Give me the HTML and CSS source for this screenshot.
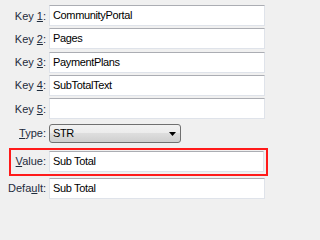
FILE: index.html
```html
<!DOCTYPE html>
<html>
<head>
<meta charset="utf-8">
<link rel="stylesheet" href="styles.css">
</head>
<body>
<div class="form">
  <div class="row key1"><label class="lbl">Key <u>1</u>:</label><div class="field">CommunityPortal</div></div>
  <div class="row"><label class="lbl">Key <u>2</u>:</label><div class="field">Pages</div></div>
  <div class="row"><label class="lbl">Key <u>3</u>:</label><div class="field">PaymentPlans</div></div>
  <div class="row"><label class="lbl">Key <u>4</u>:</label><div class="field">SubTotalText</div></div>
  <div class="row"><label class="lbl">Key <u>5</u>:</label><div class="field"></div></div>
  <div class="row typerow"><label class="lbl"><u>T</u>ype:</label>
    <div class="select"><span>STR</span>
      <svg class="arrow" width="7" height="4" viewBox="0 0 7 4"><path d="M0 0H7L3.5 4Z" fill="#000"/></svg>
    </div>
  </div>
  <div class="highlight">
    <div class="row"><label class="lbl"><u>V</u>alue:</label><div class="field">Sub Total</div></div>
  </div>
  <div class="row defrow"><label class="lbl">Defa<u>u</u>lt:</label><div class="field">Sub Total</div></div>
</div>
</body>
</html>
```
FILE: styles.css
```css
html, body {
  margin: 0;
  padding: 0;
  background: #f0f0f0;
}
body {
  font-family: "Liberation Sans", Arial, sans-serif;
  font-size: 11px;
  color: #000;
}
.form {
  box-sizing: border-box;
  width: 270px;
  height: 201px;
  display: flex;
  flex-direction: column;
  padding: 5px 0 0 0;
}
.row {
  display: grid;
  grid-template-columns: 46px 216px;
  column-gap: 3px;
  align-items: center;
  height: 21px;
  margin-bottom: 2.33px;
}
.lbl {
  text-align: right;
  color: #1e2b3c;
  white-space: nowrap;
}
.lbl u {
  text-decoration-thickness: 1px;
  text-underline-offset: 1px;
}
.field, .select span {
  letter-spacing: -0.35px;
}
.field {
  box-sizing: border-box;
  height: 21px;
  background: #fff;
  border: 1px solid #dfe3ea;
  border-top-color: #abadb3;
  padding: 0 3px;
  line-height: 19px;
  white-space: nowrap;
}
.typerow {
  margin-top: 2px;
  grid-template-columns: 46px 132px;
  height: 19px;
}
.select {
  box-sizing: border-box;
  height: 19px;
  border: 1px solid #707070;
  border-radius: 3px;
  background: linear-gradient(#f2f2f2 0%, #ebebeb 50%, #dddddd 50%, #cfcfcf 100%);
  display: flex;
  align-items: center;
  justify-content: space-between;
  padding: 0 4px 0 3px;
}
.arrow {
  display: block;
  margin-top: 1px;
}
.highlight {
  margin: 3px 2px 0 9px;
  border: 2px solid #ff1a1a;
  padding: 1px 2px 2px 0;
}
.highlight .row {
  grid-template-columns: 35px 215px;
  margin-bottom: 0;
}
.defrow {
  margin-top: 2px;
}
```
